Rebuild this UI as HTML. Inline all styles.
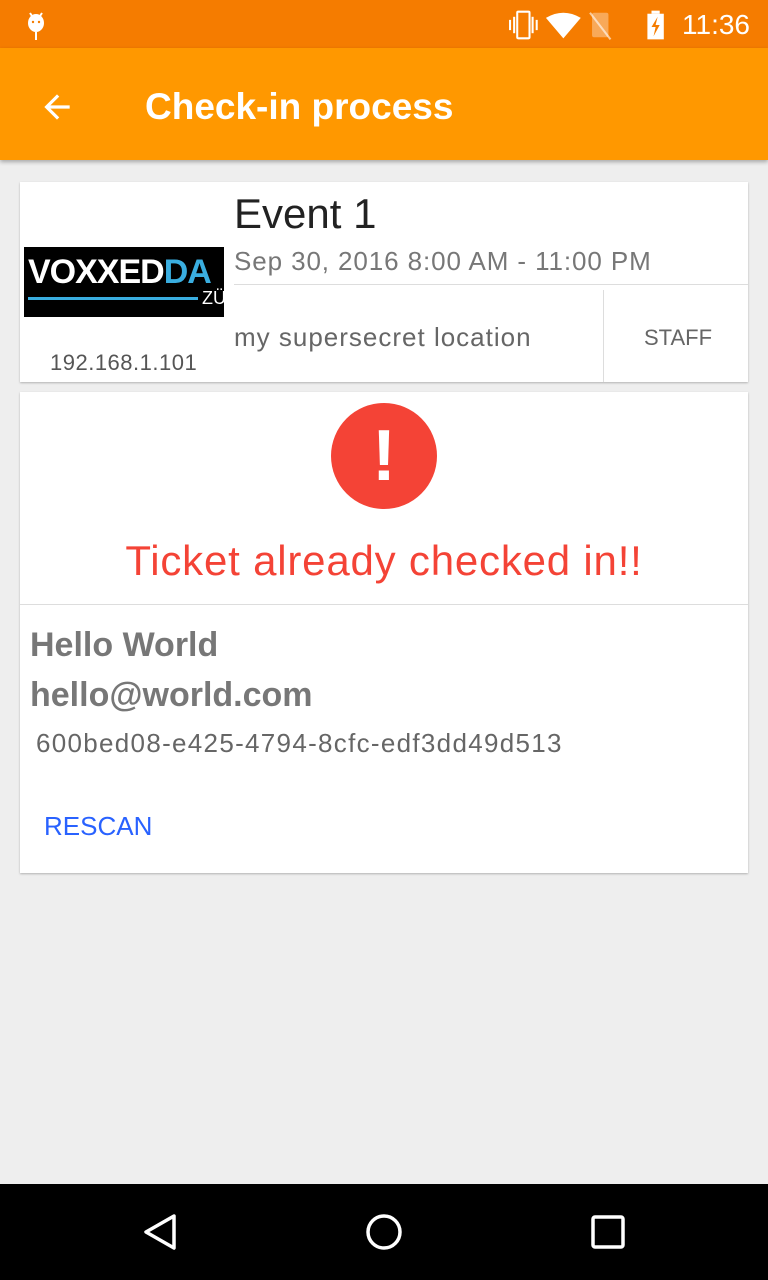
<!DOCTYPE html>
<html><head><meta charset="utf-8"><style>
*{margin:0;padding:0;box-sizing:border-box}
body{width:768px;height:1280px;background:#eeeeee;font-family:"Liberation Sans",Roboto,sans-serif;position:relative;overflow:hidden}
.sb{position:absolute;top:0;left:0;width:768px;height:48px;background:#f57c00}
.ab{position:absolute;top:48px;left:0;width:768px;height:112px;background:#ff9800;box-shadow:0 2px 4px rgba(0,0,0,.3)}
.card{position:absolute;left:20px;width:728px;background:#fff;box-shadow:0 1px 2px rgba(0,0,0,.25)}
.nav{position:absolute;top:1184px;left:0;width:768px;height:96px;background:#000}
</style></head><body>
<div class="sb">
<svg style="position:absolute;left:24px;top:10px" width="24" height="32" viewBox="0 0 24 32"><ellipse cx="12" cy="13" rx="8" ry="9" fill="#fff"/><line x1="6" y1="3" x2="8" y2="6" stroke="#fff" stroke-width="2"/><line x1="18" y1="3" x2="16" y2="6" stroke="#fff" stroke-width="2"/><rect x="11" y="22" width="2" height="8" fill="#fff"/><circle cx="9" cy="12" r="1.2" fill="#f57c00"/><circle cx="15" cy="12" r="1.2" fill="#f57c00"/></svg>
<svg style="position:absolute;left:508px;top:9px" width="164" height="32" viewBox="0 0 160 30"><rect x="1" y="10" width="2" height="10" fill="#fff"/><rect x="5" y="7" width="2" height="16" fill="#fff"/><rect x="9" y="2" width="12" height="26" rx="1" fill="none" stroke="#fff" stroke-width="2"/><rect x="23" y="7" width="2" height="16" fill="#fff"/><rect x="27" y="10" width="2" height="10" fill="#fff"/><path d="M37 8 Q54 -2 71 8 L54 28 Z" fill="#fff"/><rect x="82" y="3" width="16" height="24" rx="2" fill="#fff" opacity=".35"/><line x1="80" y1="3" x2="100" y2="29" stroke="#fff" stroke-width="2" opacity=".6"/><rect x="140" y="1" width="8" height="3" fill="#fff"/><rect x="136" y="4" width="16" height="25" fill="#fff"/><path d="M146 7 L140 17 L144 17 L142 26 L148 15 L144 15 Z" fill="#f57c00"/></svg>
<div style="position:absolute;left:682px;top:9px;color:#fff;font-size:28px">11:36</div>
</div>
<div class="ab">
<svg style="position:absolute;left:38px;top:40px" width="38" height="38" viewBox="0 0 24 24"><path d="M20 11H7.83l5.59-5.59L12 4l-8 8 8 8 1.41-1.41L7.83 13H20v-2z" fill="#fff"/></svg>
<div style="position:absolute;left:145px;top:38px;color:#fff;font-size:37px;font-weight:bold">Check-in process</div>
</div>
<div class="card" style="top:182px;height:200px">
<div style="position:absolute;left:4px;top:65px;width:200px;height:70px;background:#000;overflow:hidden">
<div style="position:absolute;left:4px;top:6px;font-size:34px;font-weight:bold;color:#fff;letter-spacing:-1px;white-space:nowrap">VOXXED<span style="color:#3aaee0">DA</span></div>
<div style="position:absolute;left:4px;top:50px;width:170px;height:3px;background:#3aaee0"></div>
<div style="position:absolute;left:178px;top:41px;font-size:18px;color:#fff">ZÜ</div>
</div>
<div style="position:absolute;left:30px;top:168px;font-size:22px;color:#555;letter-spacing:.5px">192.168.1.101</div>
<div style="position:absolute;left:214px;top:8px;font-size:42px;color:#222">Event 1</div>
<div style="position:absolute;left:214px;top:64px;font-size:26px;color:#777;letter-spacing:.9px">Sep 30, 2016 8:00 AM - 11:00 PM</div>
<div style="position:absolute;left:214px;top:102px;width:514px;height:1px;background:#ddd"></div>
<div style="position:absolute;left:583px;top:108px;width:1px;height:92px;background:#ddd"></div>
<div style="position:absolute;left:214px;top:140px;font-size:26px;color:#666;letter-spacing:1px">my supersecret location</div>
<div style="position:absolute;left:624px;top:143px;font-size:22px;color:#666">STAFF</div>
</div>
<div class="card" style="top:392px;height:481px">
<div style="position:absolute;left:311px;top:11px;width:106px;height:106px;border-radius:50%;background:#f44336;color:#fff;font-size:72px;font-weight:bold;text-align:center;line-height:106px">!</div>
<div style="position:absolute;left:0;width:728px;top:145px;text-align:center;font-size:42px;color:#f44336;letter-spacing:.8px">Ticket already checked in!!</div>
<div style="position:absolute;left:0;top:212px;width:728px;height:1px;background:#ddd"></div>
<div style="position:absolute;left:10px;top:234px;font-size:34px;font-weight:bold;color:#777">Hello World</div>
<div style="position:absolute;left:10px;top:284px;font-size:34px;font-weight:bold;color:#777">hello@world.com</div>
<div style="position:absolute;left:16px;top:336px;font-size:26px;color:#666;letter-spacing:1.3px">600bed08-e425-4794-8cfc-edf3dd49d513</div>
<div style="position:absolute;left:24px;top:419px;font-size:26px;color:#2962ff">RESCAN</div>
</div>
<div class="nav">
<svg style="position:absolute;left:140px;top:28px" width="40" height="40" viewBox="0 0 40 40"><path d="M34 4 L6 20 L34 36 Z" fill="none" stroke="#fff" stroke-width="3.5" stroke-linejoin="round"/></svg>
<svg style="position:absolute;left:364px;top:28px" width="40" height="40"><circle cx="20" cy="20" r="16" fill="none" stroke="#fff" stroke-width="3.5"/></svg>
<svg style="position:absolute;left:590px;top:30px" width="36" height="36"><rect x="3" y="3" width="30" height="30" rx="2" fill="none" stroke="#fff" stroke-width="3.5"/></svg>
</div>
</body></html>
